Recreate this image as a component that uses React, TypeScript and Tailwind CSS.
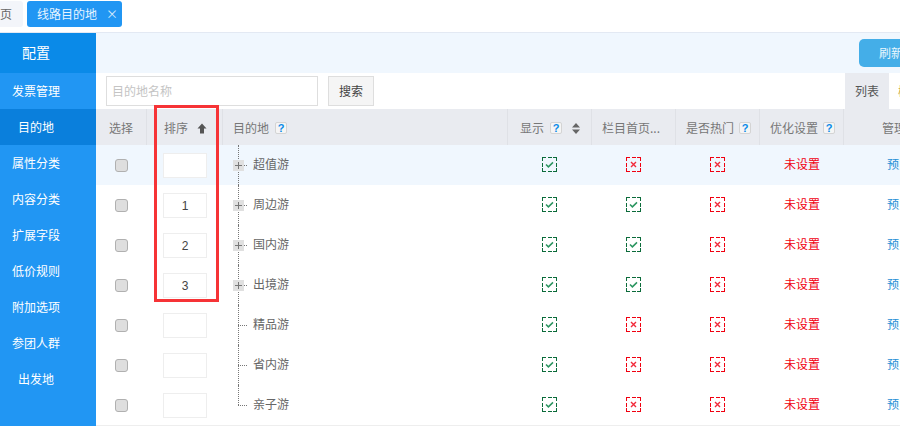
import React from "react";

const font = { fontFamily: '"Noto Sans CJK SC", "Noto Sans", sans-serif' };

function Help() {
  return (
    <span className="inline-flex h-[12px] w-[12px] items-center justify-center rounded-[2px] border border-[#d4d4d4] bg-[#f5f5f5] text-[11px] leading-none font-bold text-[#0a8ae8]" style={{ fontFamily: '"Liberation Sans", sans-serif' }}>
      ?
    </span>
  );
}

function Mark({ ok }: { ok: boolean }) {
  const c = ok ? "#0b6b3a" : "#f00010";
  return (
    <svg width="15" height="15" viewBox="0 0 15 15" fill="none" shapeRendering="crispEdges">
      <path d="M0 .5h4M5.5 .5h4M11 .5h4M.5 0v4M.5 5.5v4M.5 11v4M14.5 0v4M14.5 5.5v4M14.5 11v4M0 14.5h4M5.5 14.5h4M11 14.5h4" stroke={c} />
      {ok ? (
        <path d="M4 7.5l2.4 2.4L11 5.4" stroke="#2a9560" strokeWidth="1.5" shapeRendering="auto" />
      ) : (
        <path d="M5 5l5 5M10 5l-5 5" stroke="#f22a3a" strokeWidth="1.4" shapeRendering="auto" />
      )}
    </svg>
  );
}

const rows = [
  { name: "超值游", order: "", plus: true, a: true, b: false },
  { name: "周边游", order: "1", plus: true, a: true, b: true },
  { name: "国内游", order: "2", plus: true, a: true, b: true },
  { name: "出境游", order: "3", plus: true, a: true, b: true },
  { name: "精品游", order: "", plus: false, a: true, b: false },
  { name: "省内游", order: "", plus: false, a: true, b: false },
  { name: "亲子游", order: "", plus: false, a: true, b: false },
];

const menu = ["发票管理", "目的地", "属性分类", "内容分类", "扩展字段", "低价规则", "附加选项", "参团人群", "出发地"];

const cols = "grid grid-cols-[51px_76px_285px_84px_84px_84px_84px_1fr]";

function Head({ children, className = "" }: { children: React.ReactNode; className?: string }) {
  return <div className={`flex items-center border-r border-[#dfe1e6] pt-[2px] whitespace-nowrap ${className}`}>{children}</div>;
}

export default function App() {
  return (
    <div className="relative h-[426px] w-[900px] overflow-hidden bg-white text-[12px] text-[#666]" style={font}>
      <div className="flex h-[33px] items-start gap-[4px] border-b border-[#e3e9f3] pt-[1px]">
        <div className="flex h-[26px] w-[23px] items-center justify-end rounded-r-[3px] bg-[#f3f5fa] pr-[11px]">页</div>
        <div className="flex h-[26px] w-[95px] items-center rounded-[3px] bg-[#2196f3] pl-[10px] text-[#e8f4ff]">
          线路目的地
          <span className="ml-[9px] text-[12px] text-[#d8ecfc]">×</span>
        </div>
      </div>

      <div className="flex h-[393px]">
        <aside className="h-full w-[96px] shrink-0 bg-[#2196f3] text-white">
          <div className="flex h-[40px] items-center justify-center bg-[#0a8ae8] pr-[24px] pb-[2px] text-[14px]">配置</div>
          {menu.map((m) => (
            <div key={m} className={`flex h-[36px] items-center justify-center pr-[24px] ${m === "目的地" ? "bg-[#0a7fdc]" : ""}`}>
              {m}
            </div>
          ))}
        </aside>

        <main className="relative min-w-0 flex-1">
          <div className="flex h-[40px] items-start justify-end bg-[#f0f7fe] pt-[6px]">
            <div className="flex h-[28px] w-[41px] items-center rounded-l-[5px] bg-[#44aee8] pl-[20px] whitespace-nowrap text-[#eaf6fd]">刷新</div>
          </div>

          <div className="flex h-[36px] items-center pl-[10px]">
            <div className="flex h-[30px] w-[212px] items-center border border-[#dedede] pl-[5px] text-[#c4c4c4]">目的地名称</div>
            <div className="ml-[10px] flex h-[30px] w-[46px] items-center justify-center border border-[#dedede] bg-[#f5f5f5] text-[#444]">搜索</div>
            <div className="ml-auto flex h-full items-center">
              <div className="flex h-full w-[44px] items-center justify-center bg-[#e9ebf0] text-[#555]">列表</div>
              <div className="w-[11px] overflow-hidden pl-[9px] whitespace-nowrap text-[#c9a94f]">树</div>
            </div>
          </div>

          <div className={`${cols} h-[36px] bg-[#e9ebf0] text-[#777]`}>
            <Head className="justify-center">选择</Head>
            <Head className="pl-[17px]">
              排序
              <svg className="ml-[9px]" width="10" height="11" viewBox="0 0 10 11">
                <path d="M5 0.5L9.5 5.5H7V10.5H3V5.5H.5z" fill="#555" />
              </svg>
            </Head>
            <Head className="pl-[10px]">
              目的地
              <span className="ml-[6px] inline-flex"><Help /></span>
            </Head>
            <Head className="pl-[12px]">
              显示
              <span className="ml-[6px] inline-flex"><Help /></span>
              <svg className="ml-[10px]" width="8" height="11" viewBox="0 0 8 11">
                <path d="M4 0L8 4.5H0zM4 11L0 6.5H8z" fill="#666" />
              </svg>
            </Head>
            <Head className="pl-[10px]">栏目首页...</Head>
            <Head className="pl-[10px]">
              是否热门
              <span className="ml-[5px] inline-flex"><Help /></span>
            </Head>
            <Head className="pl-[10px]">
              优化设置
              <span className="ml-[5px] inline-flex"><Help /></span>
            </Head>
            <div className="flex items-center pt-[2px] pl-[38px] whitespace-nowrap">管理</div>
          </div>

          {rows.map((r, i) => (
            <div key={r.name} className={`${cols} h-[40px] ${i === 0 ? "bg-[#f0f7fe]" : "bg-white"}`}>
              <div className="flex items-center justify-center">
                <span className="mt-[1px] block h-[13px] w-[13px] rounded-[3px] border border-[#b0b0b0] bg-[#dedede]" />
              </div>
              <div className="flex items-center justify-center pt-[1px]">
                <span className="flex h-[25px] w-[44px] items-center justify-center border border-[#eeeeee] bg-white text-[#444]" style={{ fontFamily: '"Liberation Sans", sans-serif' }}>
                  {r.order}
                </span>
              </div>
              <div className="relative flex items-center pb-[3px] pl-[30px] text-[#666]">
                <span className={`absolute left-[15px] top-0 w-0 border-l border-dotted border-[#777] ${i === 6 ? "h-[20px]" : "h-[40px]"}`} />
                <span className="absolute left-[15px] top-[20px] h-0 w-[9px] border-t border-dotted border-[#777]" />
                {r.plus && (
                  <span className="absolute left-[10px] top-[15px] flex h-[11px] w-[11px] items-center justify-center bg-[#e0e0e0]">
                    <svg width="7" height="7" viewBox="0 0 7 7" shapeRendering="crispEdges"><path d="M0 3.5h7M3.5 0v7" stroke="#777" /></svg>
                  </span>
                )}
                <span>{r.name}</span>
              </div>
              <div className="flex items-center justify-center pr-[1px] pb-[1px]"><Mark ok={r.a} /></div>
              <div className="flex items-center justify-center pr-[1px] pb-[1px]"><Mark ok={r.b} /></div>
              <div className="flex items-center justify-center pr-[1px] pb-[1px]"><Mark ok={false} /></div>
              <div className="flex items-center justify-center pb-[3px] text-[#f00010]">未设置</div>
              <div className="flex items-center pb-[3px] pl-[43px] whitespace-nowrap text-[#1f8fd6]">预览</div>
            </div>
          ))}
          <div className="h-px bg-[#eeeeee]" />
        </main>
      </div>

      <div className="absolute left-[154px] top-[105px] h-[197px] w-[65px] border-[3px] border-[#f63336]" />
    </div>
  );
}
